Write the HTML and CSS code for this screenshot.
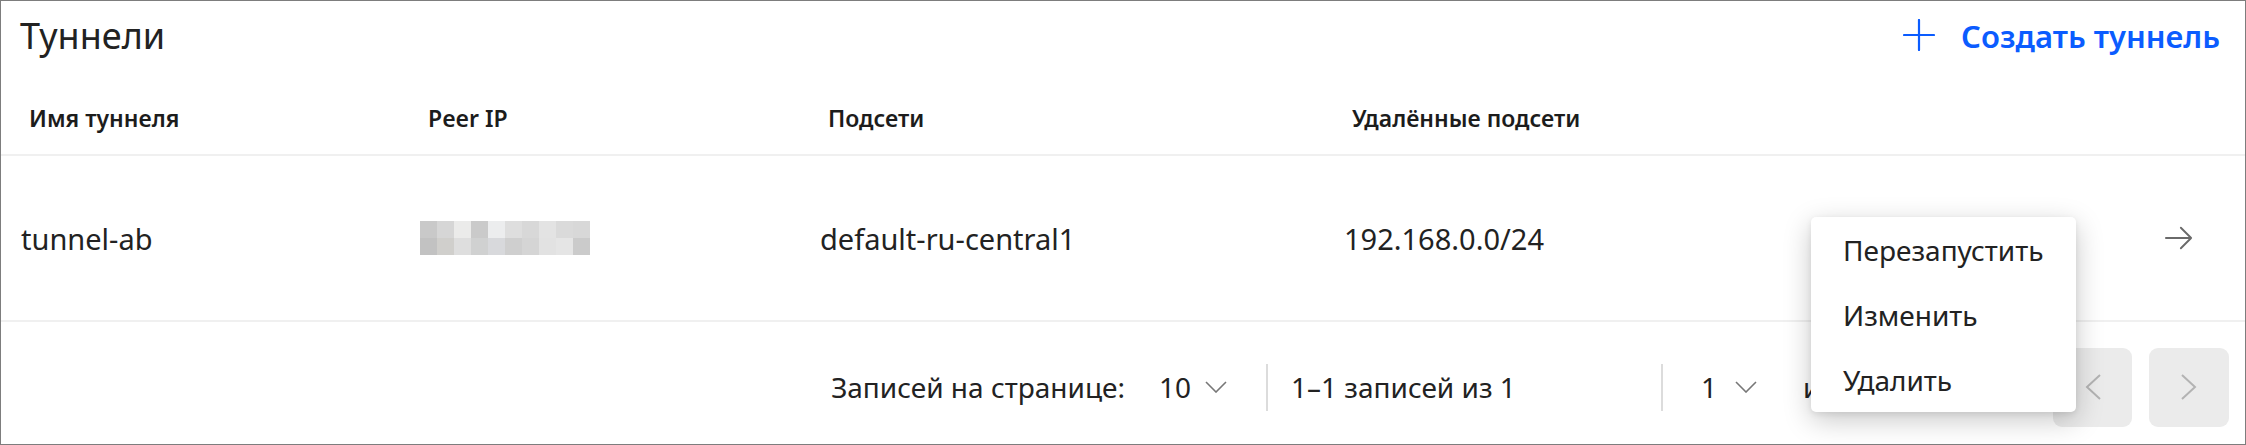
FILE: index.html
```html
<!DOCTYPE html>
<html lang="ru">
<head>
<meta charset="utf-8">
<title>Туннели</title>
<link rel="stylesheet" href="styles.css">
</head>
<body>
<div class="panel">
  <div class="topbar">
    <h1 class="title">Туннели</h1>
    <button class="create">
      <svg class="plus" width="32" height="32" viewBox="0 0 32 32"><path d="M16 1V31M1 16H31" stroke="currentColor" stroke-width="2.2" fill="none" stroke-linecap="round"/></svg>
      <span>Создать туннель</span>
    </button>
  </div>
  <div class="grid head">
    <div class="hcell">Имя туннеля</div>
    <div class="hcell">Peer IP</div>
    <div class="hcell">Подсети</div>
    <div class="hcell">Удалённые подсети</div>
    <div class="hcell"></div>
  </div>
  <div class="grid row">
    <div class="cell">tunnel-ab</div>
    <div class="cell"><div class="mosaic"><span></span><span></span><span></span><span></span><span></span><span></span><span></span><span></span><span></span><span></span><span></span><span></span><span></span><span></span><span></span><span></span><span></span><span></span><span></span><span></span></div></div>
    <div class="cell">default-ru-central1</div>
    <div class="cell">192.168.0.0/24</div>
    <div class="cell go">
      <svg width="30" height="26" viewBox="0 0 30 26"><path d="M1 13H28M17 2L28 13L17 24" stroke="currentColor" stroke-width="2" fill="none" stroke-linecap="round" stroke-linejoin="round"/></svg>
    </div>
  </div>
  <div class="footer">
    <div class="perpage">
      <span>Записей на странице:</span>
      <span class="sel">10</span>
      <svg class="chev" width="22" height="12" viewBox="0 0 22 12"><path d="M1 1L11 11L21 1" stroke="currentColor" stroke-width="1.6" fill="none"/></svg>
    </div>
    <div class="divider"></div>
    <div class="range">1–1 записей из 1</div>
    <div class="divider"></div>
    <div class="pages">
      <span>1</span>
      <svg class="chev" width="22" height="12" viewBox="0 0 22 12"><path d="M1 1L11 11L21 1" stroke="currentColor" stroke-width="1.6" fill="none"/></svg>
      <span class="of">из 1</span>
    </div>
    <button class="pg prev"><svg width="18" height="26" viewBox="0 0 18 26"><path d="M16 1L3 13L16 25" stroke="currentColor" stroke-width="2" fill="none"/></svg></button>
    <button class="pg next"><svg width="18" height="26" viewBox="0 0 18 26"><path d="M2 1L15 13L2 25" stroke="currentColor" stroke-width="2" fill="none"/></svg></button>
  </div>
  <div class="menu">
    <div class="item">Перезапустить</div>
    <div class="item">Изменить</div>
    <div class="item">Удалить</div>
  </div>
</div>
</body>
</html>
```
FILE: styles.css
```css
* { box-sizing: border-box; }
html, body { margin: 0; padding: 0; background: #fff; }
body { font-family: "Noto Sans", "Open Sans", sans-serif; color: #222; }

.panel {
  position: relative;
  width: 2246px;
  height: 445px;
  border: 1px solid #7d7d7d;
  background: #fff;
  overflow: hidden;
}

.topbar {
  height: 70px;
  display: flex;
  align-items: center;
  justify-content: space-between;
  padding: 0 25px 0 19px;
}
.title {
  margin: 0;
  font-size: 36px;
  font-weight: 400;
  color: #222;
  line-height: 1;
}
.create {
  display: flex;
  align-items: center;
  gap: 26px;
  border: 0;
  background: none;
  padding: 0;
  font-family: inherit;
  font-size: 31px;
  font-weight: 600;
  color: #0b5cff;
  cursor: pointer;
}
.plus { display: block; margin-top: -2px; }

.grid {
  display: grid;
  grid-template-columns: 399px 400px 524px 1fr 100px;
  border-bottom: 2px solid #f0f0f0;
}
.head {
  height: 85px;
  padding-top: 10px;
  align-items: center;
}
.hcell {
  padding-left: 28px;
  font-size: 23px;
  font-weight: 600;
  color: #1c1c1c;
}
.row {
  height: 166px;
  align-items: center;
}
.cell {
  padding-left: 20px;
  font-size: 29px;
  color: #222;
}
.go {
  display: flex;
  justify-content: flex-end;
  padding-right: 52px;
  color: #6a6a6a;
}
.go svg { display: block; }

.mosaic {
  display: grid;
  grid-template-columns: repeat(10, 17px);
  grid-auto-rows: 17px;
  width: 170px;
}
.mosaic span:nth-child(1) { background: #c9c9c9; }
.mosaic span:nth-child(2) { background: #d6d6d6; }
.mosaic span:nth-child(3) { background: #ebebea; }
.mosaic span:nth-child(4) { background: #cacaca; }
.mosaic span:nth-child(5) { background: #ecedee; }
.mosaic span:nth-child(6) { background: #dedede; }
.mosaic span:nth-child(7) { background: #d8d8d8; }
.mosaic span:nth-child(8) { background: #e3e3e3; }
.mosaic span:nth-child(9) { background: #dadada; }
.mosaic span:nth-child(10) { background: #d8d8d8; }
.mosaic span:nth-child(11) { background: #c2c2c2; }
.mosaic span:nth-child(12) { background: #d0cfcc; }
.mosaic span:nth-child(13) { background: #dedede; }
.mosaic span:nth-child(14) { background: #d0d1d1; }
.mosaic span:nth-child(15) { background: #d8d9dc; }
.mosaic span:nth-child(16) { background: #cfcfcf; }
.mosaic span:nth-child(17) { background: #d5d5d5; }
.mosaic span:nth-child(18) { background: #e2e2e2; }
.mosaic span:nth-child(19) { background: #e5e5e5; }
.mosaic span:nth-child(20) { background: #cbcbcb; }

.footer {
  height: 120px;
  padding: 10px 16px 0 0;
  display: flex;
  align-items: center;
  justify-content: flex-end;
  font-size: 28px;
  color: #222;
}
.perpage {
  display: flex;
  align-items: center;
  padding-right: 39px;
}
.sel { margin-left: 34px; }
.chev { display: block; color: #777; }
.perpage .chev { margin-left: 14px; }
.divider {
  width: 2px;
  height: 47px;
  background: #dcdcdc;
}
.range {
  width: 393px;
  padding-left: 23px;
}
.pages {
  width: 390px;
  display: flex;
  align-items: center;
  padding-left: 38px;
}
.pages .chev { margin-left: 18px; }
.pages .of { margin-left: 46px; }
.pg {
  width: 79px;
  height: 79px;
  border: 0;
  border-radius: 9px;
  background: #ebebeb;
  color: #b3b3b3;
  display: flex;
  align-items: center;
  justify-content: center;
  padding: 0;
}
.pg svg { display: block; }
.next { margin-left: 17px; width: 80px; }

.menu {
  position: absolute;
  left: 1810px;
  top: 216px;
  width: 265px;
  height: 195px;
  background: #fff;
  border-radius: 5px;
  box-shadow: 0 8px 28px rgba(0, 0, 0, 0.22), 0 2px 6px rgba(0, 0, 0, 0.08);
  display: flex;
  flex-direction: column;
}
.item {
  height: 65px;
  display: flex;
  align-items: center;
  padding-left: 32px;
  font-size: 28px;
  color: #222;
}
```
